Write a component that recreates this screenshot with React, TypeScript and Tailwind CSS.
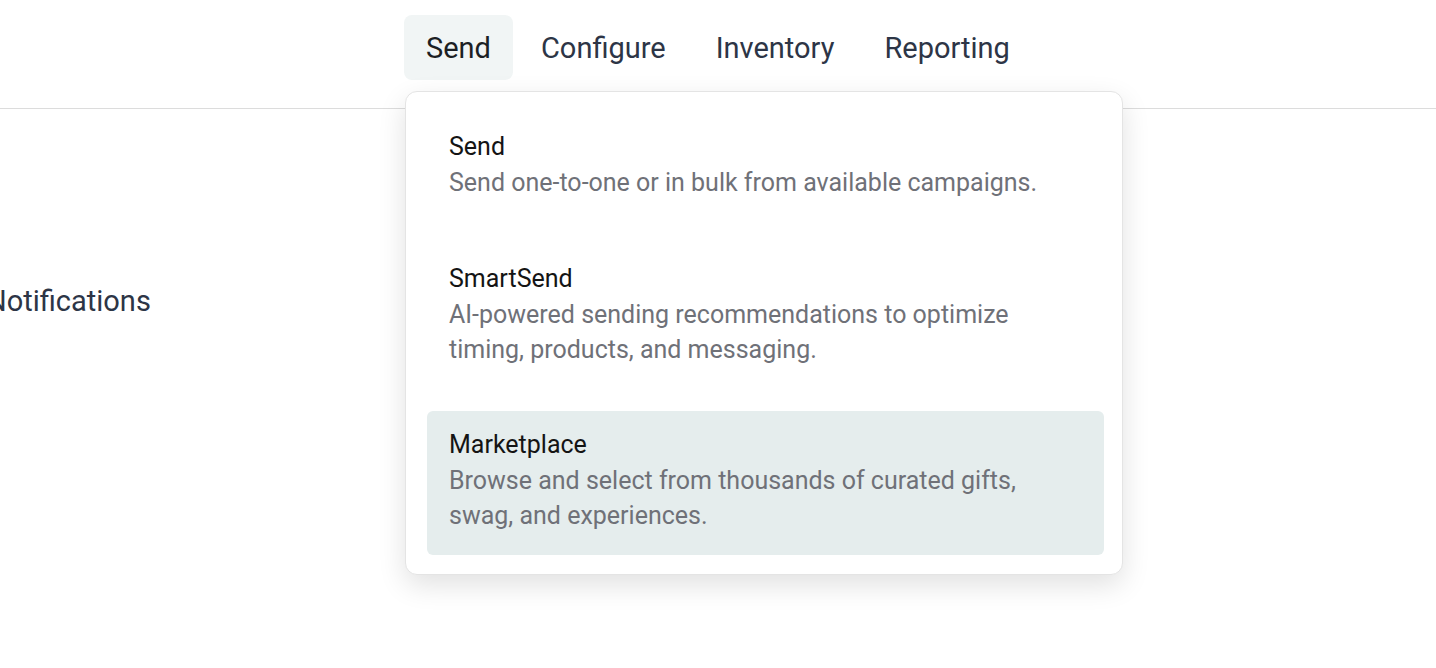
import React from "react";

const items = [
  { title: "Send", desc: "Send one-to-one or in bulk from available campaigns.", active: false },
  { title: "SmartSend", desc: "AI-powered sending recommendations to optimize timing, products, and messaging.", active: false },
  { title: "Marketplace", desc: "Browse and select from thousands of curated gifts, swag, and experiences.", active: true },
];

export default function App() {
  return (
    <div className="relative h-[668px] w-[1436px] overflow-hidden bg-white" style={{ fontFamily: "Roboto, 'Noto Sans', sans-serif" }}>
      <header className="flex h-[109px] items-start border-b border-[#dcdcdc] bg-white pl-[404px] pt-[15px]">
        <nav className="flex gap-[6px]">
          {["Send", "Configure", "Inventory", "Reporting"].map((n, i) => (
            <button
              key={n}
              className={`h-[65px] rounded-[8px] px-[22px] text-[29px] leading-[64px] ${i === 0 ? "bg-[#f1f5f5] text-[#1c1f24]" : "text-[#2d3546]"}`}
            >
              {n}
            </button>
          ))}
        </nav>
      </header>
      <main className="pt-[172px]">
        <div className="-ml-[14px] text-[29px] leading-[40px] text-[#2d3546]">Notifications</div>
      </main>
      <div className="absolute left-[405px] top-[91px] w-[718px] rounded-[12px] border border-[#e4e4e4] bg-white pb-[19px] pl-[21px] pr-[18px] pt-[21px] shadow-[0_10px_28px_rgba(0,0,0,0.12)]">
        <div className="flex flex-col gap-[22.5px]">
          {items.map((it) => (
            <div key={it.title} className={`rounded-[6px] px-[22px] pb-[22px] pt-[16px] ${it.active ? "bg-[#e5eded]" : ""}`}>
              <div className="text-[25px] leading-[36px] text-[#141414]">{it.title}</div>
              <div className="text-[25px] leading-[35px] text-[#6f7178]">{it.desc}</div>
            </div>
          ))}
        </div>
      </div>
    </div>
  );
}
